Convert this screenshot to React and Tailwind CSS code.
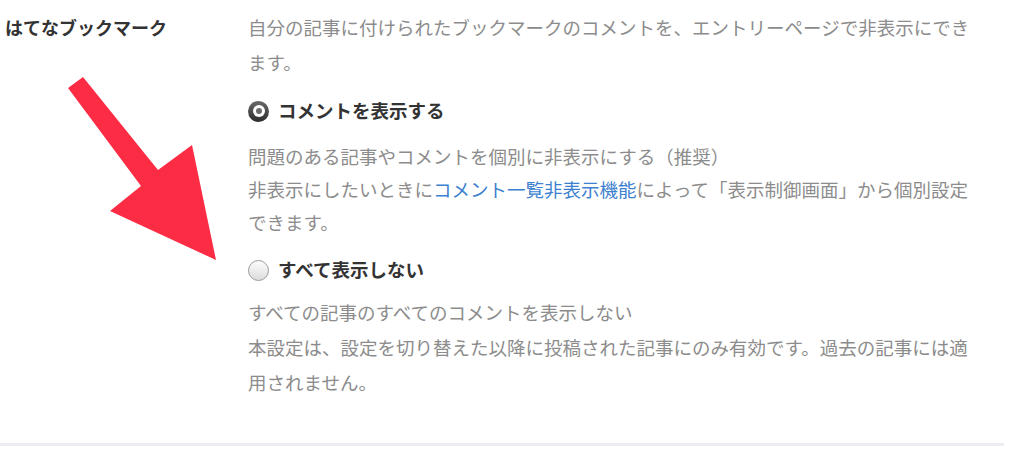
const font = { fontFamily: '"Noto Sans CJK JP", "Noto Sans", sans-serif' }

function Radio({ checked }) {
  if (checked) {
    return (
      <span className="flex h-[21px] w-[21px] shrink-0 items-center justify-center rounded-full bg-gradient-to-b from-[#6a6a6a] to-[#2e2e2e]">
        <span className="flex h-[12px] w-[12px] items-center justify-center rounded-full bg-white">
          <span className="h-[6px] w-[6px] rounded-full bg-[#6b6b6b]" />
        </span>
      </span>
    )
  }
  return (
    <span className="h-[21px] w-[21px] shrink-0 rounded-full border border-[#9a9a9a] bg-gradient-to-b from-[#fdfdfd] to-[#dcdcdc]" />
  )
}

function Option({ checked, label }) {
  return (
    <label className="flex h-[34px] items-center gap-[9px]">
      <Radio checked={checked} />
      <span className="text-[18.5px] font-bold text-[#333]">{label}</span>
    </label>
  )
}

function Arrow() {
  return (
    <svg className="pointer-events-none absolute left-0 top-0" width="240" height="280" viewBox="0 0 240 280">
      <polygon
        points="68,88 83,77 158,170 192,145 216,260 110,211 141,186"
        fill="#fb2c44"
      />
    </svg>
  )
}

export default function App() {
  return (
    <div className="relative h-[457px] w-[1024px] overflow-hidden bg-white" style={font}>
      <div className="flex pt-[10px]">
        <div className="w-[248px] shrink-0 pl-[5px] text-[18px] font-bold leading-[34px] text-[#333]">
          はてなブックマーク
        </div>
        <div className="w-[736px] text-[18.5px] text-[#8c8c8c]">
          <p className="leading-[35px]">
            自分の記事に付けられたブックマークのコメントを、エントリーページで非表示にできます。
          </p>
          <div className="mt-[14px]">
            <Option checked label="コメントを表示する" />
          </div>
          <p className="mt-[12px] leading-[33px]">
            問題のある記事やコメントを個別に非表示にする（推奨）
            <br />
            非表示にしたいときに<a className="text-[#3d7fd0]">コメント一覧非表示機能</a>によって「表示制御画面」から個別設定できます。
          </p>
          <div className="mt-[14px]">
            <Option label="すべて表示しない" />
          </div>
          <p className="mt-[8px] leading-[35px]">
            すべての記事のすべてのコメントを表示しない
            <br />
            本設定は、設定を切り替えた以降に投稿された記事にのみ有効です。過去の記事には適用されません。
          </p>
        </div>
      </div>
      <div className="mt-[43px] h-[3px] w-[1004px] bg-[#ececf2]" />
      <Arrow />
    </div>
  )
}
